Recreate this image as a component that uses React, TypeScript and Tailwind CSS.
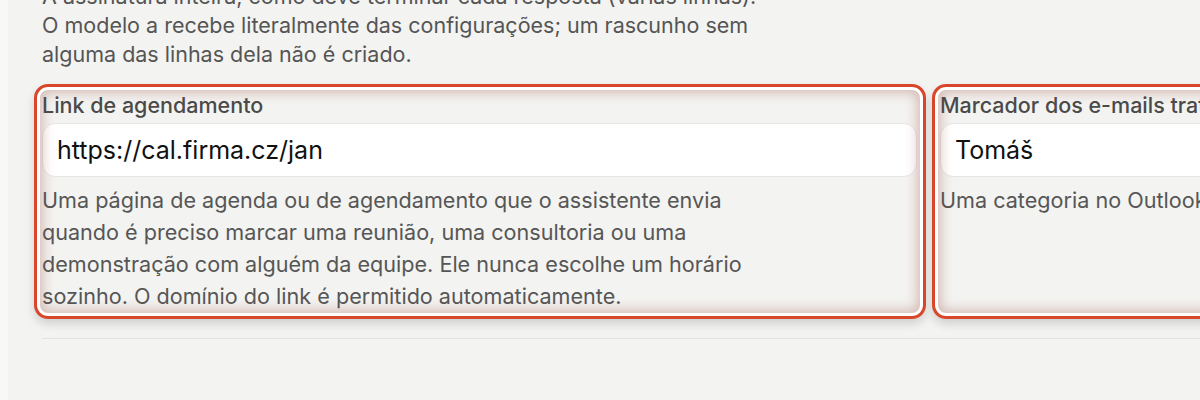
type FieldProps = {
  label: string;
  value: string;
  help: string;
};

function HighlightedField({ label, value, help }: FieldProps) {
  return (
    <div className="relative flex flex-col">
      <label className="text-[21.5px] font-medium leading-[28px] text-[#4a4a4a]">{label}</label>
      <input
        readOnly
        value={value}
        className="mt-[4px] h-[54px] w-full rounded-[13px] border border-[#e6e6e4] bg-white px-[14px] text-[25px] text-[#111] outline-none"
      />
      <p className="mt-[7px] max-w-[740px] text-[21.6px] leading-[32px] text-[#565656]">{help}</p>

      {/* highlight overlay */}
      <div className="pointer-events-none absolute -top-[7px] -bottom-[7px] -left-[8px] -right-[9px] rounded-[14px] border-[3.5px] border-[#d8462b] shadow-[inset_0_0_0_3px_#ffffff,inset_0_0_12px_6px_rgba(150,70,60,0.32),0_5px_10px_rgba(0,0,0,0.14)]" />
    </div>
  );
}

export default function App() {
  return (
    <div className="flex h-[400px] w-[1200px] overflow-hidden bg-[#f3f3f1] font-['Inter',sans-serif]">
      <div className="w-2 shrink-0 bg-[#f8f8f7]" />
      <div className="min-w-0 flex-1 pl-[34px]">
        <p className="-mt-[18px] max-w-[740px] text-[21.5px] leading-[29px] text-[#555555]">
          A assinatura inteira, como deve terminar cada resposta (várias linhas).
          <br />
          O modelo a recebe literalmente das configurações; um rascunho sem alguma das linhas dela
          não é criado.
        </p>

        <div className="mt-[22px] grid w-[1773px] grid-cols-2 gap-[23px]">
          <HighlightedField
            label="Link de agendamento"
            value="https://cal.firma.cz/jan"
            help="Uma página de agenda ou de agendamento que o assistente envia quando é preciso marcar uma reunião, uma consultoria ou uma demonstração com alguém da equipe. Ele nunca escolhe um horário sozinho. O domínio do link é permitido automaticamente."
          />
          <HighlightedField
            label="Marcador dos e-mails tratados"
            value="Tomáš"
            help="Uma categoria no Outlook para os e-mails já tratados."
          />
        </div>

        <div className="mt-[26px] h-px bg-[#e3e3e1]" />
      </div>
    </div>
  );
}
